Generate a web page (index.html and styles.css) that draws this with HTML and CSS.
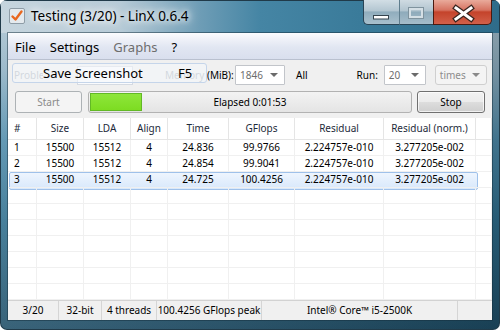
FILE: index.html
```html
<!DOCTYPE html>
<html lang="en">
<head>
    <meta charset="UTF-8">
    <title>Testing (3/20) - LinX 0.6.4</title>
    <link rel="stylesheet" href="styles.css">
</head>
<body>
    <div class="window">
        <div class="titlebar">
            <svg class="app-icon" width="16" height="16" viewBox="0 0 16 16">
                <rect x="0.5" y="0.5" width="15" height="15" rx="1.5" fill="#e4eaee" stroke="#8e9ca6"/>
                <path d="M3.5 8.5 L6.5 11.5 L12.5 3.5" fill="none" stroke="#e8671f" stroke-width="2.4" stroke-linecap="round" stroke-linejoin="round"/>
            </svg>
            <span class="title">Testing (3/20) - LinX 0.6.4</span>
            <div class="caption">
                <span class="cap-btn cap-min">
                    <svg width="35" height="24" viewBox="0 0 35 24">
                        <rect x="9.5" y="15.5" width="15" height="3.5" fill="#fff" stroke="#35444e"/>
                    </svg>
                </span>
                <span class="cap-btn cap-max">
                    <svg width="34" height="24" viewBox="0 0 34 24">
                        <rect x="8.5" y="7.5" width="15" height="11" fill="none" stroke="#7f939e" stroke-width="1"/>
                        <rect x="10" y="9" width="12" height="8" fill="none" stroke="#d4dfe5" stroke-width="2"/>
                    </svg>
                </span>
                <span class="cap-btn cap-close">
                    <svg width="58" height="24" viewBox="0 0 58 24">
                        <path d="M22 8 L37 19 M37 8 L22 19" stroke="#3a2520" stroke-width="5.5" stroke-linecap="square"/>
                        <path d="M22 8 L37 19 M37 8 L22 19" stroke="#fff" stroke-width="3" stroke-linecap="square"/>
                    </svg>
                </span>
            </div>
        </div>

        <div class="frame">
            <div class="client">
                <div class="menubar">
                    <span class="menu-item">File</span>
                    <span class="menu-item">Settings</span>
                    <span class="menu-item disabled">Graphs</span>
                    <span class="menu-item">?</span>
                </div>

                <div class="toolbar">
                    <div class="params">
                        <span class="label label-problem"><span class="faded">Problem size:</span></span>
                        <span class="edit"></span>
                        <span class="label label-memory"><span class="faded">Memory</span> (MiB):</span>
                        <span class="combo combo-mem">1846<i class="arrow"></i></span>
                        <span class="label label-all">All</span>
                        <span class="label label-run">Run:</span>
                        <span class="combo combo-run">20<i class="arrow"></i></span>
                        <span class="combo combo-unit disabled">times<i class="arrow"></i></span>

                        <div class="ctx-item">
                            <span class="ctx-text">Save Screenshot</span>
                            <span class="ctx-key">F5</span>
                        </div>
                    </div>

                    <div class="run-row">
                        <button class="btn btn-start" disabled>Start</button>
                        <div class="progress">
                            <div class="progress-fill" style="width: 52px"></div>
                            <span class="progress-text">Elapsed 0:01:53</span>
                        </div>
                        <button class="btn btn-stop">Stop</button>
                    </div>
                </div>

                <div class="results">
                    <div class="row head">
                        <span class="cell left">#</span>
                        <span class="cell">Size</span>
                        <span class="cell">LDA</span>
                        <span class="cell">Align</span>
                        <span class="cell">Time</span>
                        <span class="cell">GFlops</span>
                        <span class="cell">Residual</span>
                        <span class="cell">Residual (norm.)</span>
                        <span class="cell"></span>
                    </div>
                    <div class="row">
                        <span class="cell left">1</span>
                        <span class="cell">15500</span>
                        <span class="cell">15512</span>
                        <span class="cell">4</span>
                        <span class="cell">24.836</span>
                        <span class="cell">99.9766</span>
                        <span class="cell">2.224757e-010</span>
                        <span class="cell">3.277205e-002</span>
                        <span class="cell"></span>
                    </div>
                    <div class="row">
                        <span class="cell left">2</span>
                        <span class="cell">15500</span>
                        <span class="cell">15512</span>
                        <span class="cell">4</span>
                        <span class="cell">24.854</span>
                        <span class="cell">99.9041</span>
                        <span class="cell">2.224757e-010</span>
                        <span class="cell">3.277205e-002</span>
                        <span class="cell"></span>
                    </div>
                    <div class="row selected">
                        <span class="cell left">3</span>
                        <span class="cell">15500</span>
                        <span class="cell">15512</span>
                        <span class="cell">4</span>
                        <span class="cell">24.725</span>
                        <span class="cell">100.4256</span>
                        <span class="cell">2.224757e-010</span>
                        <span class="cell">3.277205e-002</span>
                        <span class="cell"></span>
                    </div>
                    <div class="row empty"><span class="cell"></span><span class="cell"></span><span class="cell"></span><span class="cell"></span><span class="cell"></span><span class="cell"></span><span class="cell"></span><span class="cell"></span><span class="cell"></span></div>
                    <div class="row empty"><span class="cell"></span><span class="cell"></span><span class="cell"></span><span class="cell"></span><span class="cell"></span><span class="cell"></span><span class="cell"></span><span class="cell"></span><span class="cell"></span></div>
                    <div class="row empty"><span class="cell"></span><span class="cell"></span><span class="cell"></span><span class="cell"></span><span class="cell"></span><span class="cell"></span><span class="cell"></span><span class="cell"></span><span class="cell"></span></div>
                    <div class="row empty"><span class="cell"></span><span class="cell"></span><span class="cell"></span><span class="cell"></span><span class="cell"></span><span class="cell"></span><span class="cell"></span><span class="cell"></span><span class="cell"></span></div>
                    <div class="row empty"><span class="cell"></span><span class="cell"></span><span class="cell"></span><span class="cell"></span><span class="cell"></span><span class="cell"></span><span class="cell"></span><span class="cell"></span><span class="cell"></span></div>
                    <div class="row empty"><span class="cell"></span><span class="cell"></span><span class="cell"></span><span class="cell"></span><span class="cell"></span><span class="cell"></span><span class="cell"></span><span class="cell"></span><span class="cell"></span></div>
                    <div class="row empty"><span class="cell"></span><span class="cell"></span><span class="cell"></span><span class="cell"></span><span class="cell"></span><span class="cell"></span><span class="cell"></span><span class="cell"></span><span class="cell"></span></div>
                </div>

                <div class="statusbar">
                    <span class="panel p-run">3/20</span>
                    <span class="panel p-bits">32-bit</span>
                    <span class="panel p-threads">4 threads</span>
                    <span class="panel p-peak">100.4256 GFlops peak</span>
                    <span class="panel p-cpu">Intel® Core™ i5-2500K</span>
                    <span class="panel p-grip"></span>
                </div>
            </div>
        </div>
    </div>
</body>
</html>
```

FILE: styles.css
```css
* {
    margin: 0;
    padding: 0;
    box-sizing: border-box;
}

body {
    width: 500px;
    height: 330px;
    overflow: hidden;
    background: #ffffff;
    font-family: "Noto Sans", sans-serif;
    color: #000;
}

.window {
    height: 330px;
    display: flex;
    flex-direction: column;
    border-radius: 7px;
    overflow: hidden;
    box-shadow: inset 0 0 0 1px #203a49;
    background:
        linear-gradient(to right, rgba(255, 255, 255, 0.12), rgba(0, 0, 0, 0.18)),
        linear-gradient(to bottom, #b6cad6 0, #8fb1c4 70px, #4f8cab 140px, #2f6f8e 220px, #1e4d66 330px);
}

/* title bar */

.titlebar {
    height: 35px;
    display: flex;
    align-items: flex-start;
    background: linear-gradient(to right, #c6d5de 0, #b7cbd7 120px, #6e9db6 200px, #4585a4 260px, #3a7b9a 360px, #2f6c8a 500px);
    box-shadow: inset 0 1px 0 #203a49, inset 1px 0 0 #203a49, inset -1px 0 0 #203a49;
}

.app-icon {
    margin: 8px 0 0 9px;
    flex: none;
}

.title {
    margin: 8px 0 0 6px;
    font-size: 13.5px;
    line-height: 16px;
    color: #000;
    text-shadow: 0 0 6px #fff, 0 0 10px #fff, 0 0 14px rgba(255, 255, 255, 0.9);
}

.caption {
    margin-left: auto;
    margin-right: 8px;
    display: flex;
    height: 25px;
}

.cap-btn {
    display: block;
    height: 25px;
    border: 1px solid #2a4556;
    border-top: none;
}

.cap-btn svg {
    display: block;
}

.cap-min {
    width: 36px;
    border-right: none;
    border-radius: 0 0 0 5px;
    background: linear-gradient(#d2dee5 0, #b3c6d1 45%, #90adbd 50%, #a9c0cd 100%);
}

.cap-max {
    width: 34px;
    border-left: 1px solid #5f7d8d;
    border-right: none;
    background: linear-gradient(#cfdbe2 0, #b1c4cf 45%, #8eabbb 50%, #a6bdca 100%);
}

.cap-close {
    width: 59px;
    border-color: #4a1a10;
    border-radius: 0 0 5px 0;
    background: linear-gradient(#e9aa9b 0, #d67361 42%, #c4432b 50%, #d2604a 100%);
}

/* client area */

.frame {
    flex: 1;
    padding: 0 8px 10px 8px;
    display: flex;
}

.client {
    flex: 1;
    display: flex;
    flex-direction: column;
    background: #f0f0f0;
    box-shadow: 0 0 0 1px rgba(20, 45, 60, 0.5);
}

.menubar {
    height: 27px;
    display: flex;
    align-items: center;
    padding-top: 2px;
    font-size: 13px;
    background: linear-gradient(#fbfcfe 0, #f1f3f9 20%, #e1e6f2 55%, #d9dfee 100%);
    border-bottom: 1px solid #b9c0cf;
}

.menu-item {
    padding: 0 7px;
}

.menu-item.disabled {
    color: #6d6d6d;
}

.toolbar {
    height: 58px;
    font-size: 10px;
}

.params {
    position: relative;
    display: flex;
    align-items: center;
    height: 30px;
    padding: 5px 0 5px 6px;
}

.label {
    flex: none;
    white-space: nowrap;
}

.faded {
    color: #a9b0ba;
}

/* the rest of the label is hidden behind the menu item fade */
.label-problem {
    width: 63px;
}

.label-problem .faded {
    display: block;
    width: 29px;
    overflow: hidden;
}

.edit {
    width: 56px;
    height: 19px;
    border: 1px solid #d5dae2;
    background: #fafbfd;
}

.label-memory {
    margin-left: 32px;
    width: 68px;
}

.label-all {
    margin-left: 11px;
}

.label-run {
    margin-left: 49px;
}

.combo {
    position: relative;
    height: 20px;
    display: flex;
    align-items: center;
    padding-left: 4px;
    color: #6d6d6d;
    background: #fff;
    border: 1px solid #c2c5ca;
    border-radius: 1px;
    font-size: 10px;
}

.combo .arrow {
    position: absolute;
    right: 6px;
    top: 7px;
    border-left: 4px solid transparent;
    border-right: 4px solid transparent;
    border-top: 4px solid #6b6b6b;
}

.combo-mem {
    width: 50px;
    margin-left: 2px;
}

.combo-run {
    width: 42px;
    margin-left: 6px;
}

.combo-unit {
    width: 52px;
    margin-left: 9px;
}

.combo.disabled {
    background: #f4f4f4;
    border-color: #cfcfcf;
    border-radius: 3px;
    color: #8d8d8d;
}

.combo.disabled .arrow {
    border-top-color: #8a8a8a;
}

/* faded context menu item left over the controls */
.ctx-item {
    position: absolute;
    left: 4px;
    top: 3px;
    width: 195px;
    height: 20px;
    border: 1px solid #c5d5ea;
    border-radius: 3px;
    background: rgba(244, 247, 252, 0.55);
    font-size: 13px;
    line-height: 18px;
}

.ctx-text {
    position: absolute;
    left: 30px;
    top: 0;
}

.ctx-key {
    position: absolute;
    left: 165px;
    top: 0;
}

.run-row {
    display: flex;
    align-items: center;
    gap: 6px;
    height: 28px;
    padding: 0 7px 4px 7px;
}

.btn {
    height: 22px;
    font-family: "Noto Sans", sans-serif;
    font-size: 10px;
    border-radius: 3px;
}

.btn-start {
    width: 67px;
    color: #8a8a8a;
    background: #f4f4f4;
    border: 1px solid #adb2b5;
}

.btn-stop {
    width: 68px;
    margin-left: -1px;
    color: #000;
    border: 1px solid #707070;
    background: linear-gradient(#f2f2f2 0, #ebebeb 50%, #dddddd 50%, #cfcfcf 100%);
    box-shadow: inset 0 0 0 1px rgba(255, 255, 255, 0.7);
}

.progress {
    position: relative;
    flex: 1;
    height: 22px;
    padding: 1px;
    border: 1px solid #b2b2b2;
    border-radius: 3px;
    background: linear-gradient(#f3f3f3, #e4e4e4);
}

.progress-fill {
    height: 18px;
    background: linear-gradient(#8ee63a, #7ddc22);
    border: 1px solid #62b925;
}

.progress-text {
    position: absolute;
    left: 0;
    right: 0;
    top: 3px;
    text-align: center;
    font-size: 10px;
}

/* results list */

.results {
    flex: 1;
    overflow: hidden;
    background: #fff;
    font-size: 10px;
}

.row {
    position: relative;
    display: grid;
    grid-template-columns: 29px 47px 47px 37px 61px 66px 89px 92px 16px;
    height: 16px;
}

.cell {
    position: relative;
    text-align: center;
    line-height: 15px;
    white-space: nowrap;
    border-right: 1px solid #f0f0f0;
    border-bottom: 1px solid #f0f0f0;
}

.cell.left {
    text-align: left;
    padding-left: 6px;
}

.row.head {
    height: 22px;
}

.row.head .cell {
    line-height: 21px;
    color: #1d2a3a;
    border-right-color: #e5e5e5;
    border-bottom-color: #e5e5e5;
}

.row.selected::before {
    content: "";
    position: absolute;
    left: 1px;
    top: 0;
    width: 467px;
    height: 16px;
    border: 1px solid #9fc1ea;
    border-radius: 2px;
    background: linear-gradient(#eef5fe, #d8e8fb);
}

.row.selected .cell {
    border-right-color: transparent;
}

/* status bar */

.statusbar {
    height: 20px;
    display: grid;
    grid-template-columns: 51px 43px 55px 105px 196px 34px;
    border-top: 1px solid #d2d2d2;
    background: #f0f0f0;
    font-size: 10px;
}

.panel {
    text-align: center;
    line-height: 18px;
    white-space: nowrap;
    border-right: 1px solid #d5d5d5;
}

.panel.p-grip {
    border-right: none;
}
```
